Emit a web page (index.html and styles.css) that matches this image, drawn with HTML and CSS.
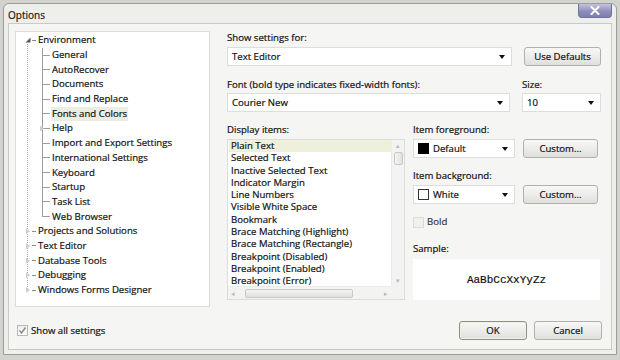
FILE: index.html
```html
<!DOCTYPE html>
<html lang="en">
<head>
    <meta charset="UTF-8">
    <title>Options</title>
    <link rel="stylesheet" href="styles.css">
</head>
<body>
    <div class="window">
        <div class="titlebar">
            <span class="title">Options</span>
            <span class="close">
                <svg width="10" height="9" viewBox="0 0 10 9"><path d="M1.5 1 L8.5 8 M8.5 1 L1.5 8" stroke="#fff" stroke-width="2" stroke-linecap="round"/></svg>
            </span>
        </div>

        <div class="client">
            <div class="main">
                <div class="tree">
                    <ul class="roots">
                        <li>
                            <div class="row">
                                <span class="exp"><svg width="6" height="6" viewBox="0 0 6 6"><path d="M5.5 0.5 V5.5 H0.5 Z" fill="#5a5a5a"/></svg></span>
                                <span class="dash"></span>
                                <span class="text">Environment</span>
                            </div>
                            <ul class="children">
                                <li><span class="text">General</span></li>
                                <li><span class="text">AutoRecover</span></li>
                                <li><span class="text">Documents</span></li>
                                <li><span class="text">Find and Replace</span></li>
                                <li><span class="text selected">Fonts and Colors</span></li>
                                <li><span class="exp closed sub"></span><span class="text">Help</span></li>
                                <li><span class="text">Import and Export Settings</span></li>
                                <li><span class="text">International Settings</span></li>
                                <li><span class="text">Keyboard</span></li>
                                <li><span class="text">Startup</span></li>
                                <li><span class="text">Task List</span></li>
                                <li><span class="text">Web Browser</span></li>
                            </ul>
                        </li>
                        <li><div class="row"><span class="exp closed"></span><span class="dash"></span><span class="text">Projects and Solutions</span></div></li>
                        <li><div class="row"><span class="exp closed"></span><span class="dash"></span><span class="text">Text Editor</span></div></li>
                        <li><div class="row"><span class="exp closed"></span><span class="dash"></span><span class="text">Database Tools</span></div></li>
                        <li><div class="row"><span class="exp closed"></span><span class="dash"></span><span class="text">Debugging</span></div></li>
                        <li><div class="row"><span class="exp closed"></span><span class="dash"></span><span class="text">Windows Forms Designer</span></div></li>
                    </ul>
                </div>

                <div class="pane">
                    <div class="label">Show settings for:</div>
                    <div class="line first">
                        <div class="select"><span>Text Editor</span><i class="arrow"></i></div>
                        <div class="button">Use Defaults</div>
                    </div>

                    <div class="line labels">
                        <div class="label">Font (bold type indicates fixed-width fonts):</div>
                        <div class="label">Size:</div>
                    </div>
                    <div class="line second">
                        <div class="select"><span>Courier New</span><i class="arrow"></i></div>
                        <div class="select"><span>10</span><i class="arrow"></i></div>
                    </div>

                    <div class="lower">
                        <div class="items-col">
                            <div class="label head">Display items:</div>
                            <div class="listbox">
                                <div class="items">
                                    <div class="item current">Plain Text</div>
                                    <div class="item">Selected Text</div>
                                    <div class="item">Inactive Selected Text</div>
                                    <div class="item">Indicator Margin</div>
                                    <div class="item">Line Numbers</div>
                                    <div class="item">Visible White Space</div>
                                    <div class="item">Bookmark</div>
                                    <div class="item">Brace Matching (Highlight)</div>
                                    <div class="item">Brace Matching (Rectangle)</div>
                                    <div class="item">Breakpoint (Disabled)</div>
                                    <div class="item">Breakpoint (Enabled)</div>
                                    <div class="item">Breakpoint (Error)</div>
                                </div>
                                <div class="vscroll">
                                    <span class="sarrow">&#9652;</span>
                                    <span class="vthumb"></span>
                                    <span class="sarrow bottom">&#9662;</span>
                                </div>
                                <div class="hscroll">
                                    <span class="sarrow">&#9666;</span>
                                    <span class="hthumb"></span>
                                    <span class="sarrow">&#9656;</span>
                                </div>
                                <div class="corner"></div>
                            </div>
                        </div>

                        <div class="props-col">
                            <div class="label head">Item foreground:</div>
                            <div class="line color">
                                <div class="select"><span class="swatch black"></span><span>Default</span><i class="arrow"></i></div>
                                <div class="button">Custom...</div>
                            </div>
                            <div class="label head gap">Item background:</div>
                            <div class="line color">
                                <div class="select"><span class="swatch white"></span><span>White</span><i class="arrow"></i></div>
                                <div class="button">Custom...</div>
                            </div>
                            <div class="check-line bold">
                                <span class="box disabled"></span>
                                <span>Bold</span>
                            </div>
                            <div class="label head sample-label">Sample:</div>
                            <div class="sample">AaBbCcXxYyZz</div>
                        </div>
                    </div>
                </div>
            </div>

            <div class="footer">
                <div class="check-line">
                    <span class="box"><svg width="9" height="9" viewBox="0 0 9 9"><path d="M1.5 4.5 L3.5 7 L7.5 1.5" fill="none" stroke="#8c8c8c" stroke-width="1.4"/></svg></span>
                    <span>Show all settings</span>
                </div>
                <div class="buttons">
                    <div class="button default">OK</div>
                    <div class="button">Cancel</div>
                </div>
            </div>
        </div>
    </div>
</body>
</html>
```

FILE: styles.css
```css
body { margin: 0; background: linear-gradient(#d2d2ce 0 355px, #4e4f50 355px); font-family: "Open Sans", "Liberation Sans", sans-serif; font-size: 9.6px; color: #111; -webkit-text-stroke: 0.2px #111; }

.window { margin: 3px 3px 0 3px; height: 352px; box-sizing: border-box; background: #eeeeeb; border: 1px solid #9c9c9a; border-radius: 6px 6px 0 0; padding: 0 4px 4px; display: flex; flex-direction: column; }
.titlebar { height: 19px; display: flex; justify-content: space-between; align-items: flex-start; }
.title { padding-top: 4px; font-size: 10px; color: #222; }
.close { width: 34px; height: 14px; display: flex; align-items: center; justify-content: center; background: linear-gradient(#c4c4de, #8e8ebe 55%, #7e7eb0); border: 1px solid #72729a; border-top: none; border-radius: 0 0 4px 4px; box-sizing: border-box; }

.client { flex: 1; background: #f5f5f3; border: 1px solid #c9c9c5; padding: 7px 9px 0 6px; display: flex; flex-direction: column; }
.main { display: grid; grid-template-columns: 195px 1fr; column-gap: 17px; }

/* tree */
.tree { height: 276px; box-sizing: border-box; background: #fff; border: 1px solid #dcdcd8; padding-top: 1px; }
.tree ul { list-style: none; margin: 0; padding: 0; }
.roots { background: repeating-linear-gradient(#a9a9a9 0 1px, transparent 1px 2px) 11px 7px / 1px calc(100% - 14.7px) no-repeat; }
.row { display: flex; align-items: center; height: 14.7px; padding-left: 9px; }
.exp { width: 6px; height: 6px; display: flex; background: #fff; }
.exp.closed { width: 4px; height: 6px; margin-left: 1px; margin-right: 1px; clip-path: polygon(0 0, 100% 50%, 0 100%); background: #cfcfcf; }
.exp.sub { margin-left: -11px; margin-right: 7px; }
.dash { width: 4px; height: 1px; background: #8c8c8c; margin-left: 1px; }
.row .text { margin-left: 1px; }
.text { padding: 0 1px; line-height: 14px; }
.text.selected { background: #ecede2; }
.children li { height: 14.7px; display: flex; align-items: center; padding-left: 35px; background: linear-gradient(#9c9c9c, #9c9c9c) 26px 0 / 1px 100% no-repeat, linear-gradient(#9c9c9c, #9c9c9c) 26px 50% / 8px 1px no-repeat; }
.children li:last-child { background: linear-gradient(#9c9c9c, #9c9c9c) 26px 0 / 1px 50% no-repeat, linear-gradient(#9c9c9c, #9c9c9c) 26px 50% / 8px 1px no-repeat; }

/* right pane */
.pane { display: flex; flex-direction: column; padding-right: 1px; }
.label { line-height: 14px; height: 14px; white-space: nowrap; }
.label.head { margin-bottom: 2px; }
.line { display: grid; grid-template-columns: 1fr 77px; column-gap: 12px; }
.line.first { margin-top: 2px; }
.line.labels { margin-top: 12px; grid-template-columns: 1fr 79px; }
.line.second { margin-top: 1px; grid-template-columns: 1fr 79px; }

.select { height: 19px; box-sizing: border-box; background: #fff; border: 1px solid #dddddb; display: flex; align-items: center; padding: 0 6px 0 4px; }
.select span { flex: 1; }
.arrow { width: 0; height: 0; border-left: 3.5px solid transparent; border-right: 3.5px solid transparent; border-top: 4px solid #111; }
.button { height: 19px; box-sizing: border-box; border: 1px solid #b0b0ac; border-radius: 3px; background: linear-gradient(#f8f8f7, #ececea 50%, #dfdfdc); display: flex; align-items: center; justify-content: center; }
.button.default { border-color: #8f8f88; box-shadow: inset 0 0 0 1px #eef3e0; }

.lower { margin-top: 11px; display: grid; grid-template-columns: 178px 1fr; column-gap: 8px; }

.listbox { height: 161px; box-sizing: border-box; background: #fff; border: 1px solid #dcdcd8; display: grid; grid-template-columns: 1fr 13px; grid-template-rows: 1fr 13px; }
.items { overflow: hidden; padding-left: 1px; }
.item { height: 12.3px; line-height: 12.3px; padding-left: 2px; white-space: nowrap; }
.item.current { background: #eef0dc; }
.vscroll { background: #f3f3f1; border-left: 1px solid #ececea; display: flex; flex-direction: column; align-items: center; }
.vscroll .bottom { margin-top: auto; }
.sarrow { font-size: 7px; line-height: 11px; color: #b8b8b8; -webkit-text-stroke: 0; }
.vthumb { width: 9px; height: 13px; box-sizing: border-box; border: 1px solid #c9c9c6; border-radius: 2px; background: linear-gradient(90deg, #f4f4f3, #e2e2df); margin-top: 1px; }
.hscroll { background: #f3f3f1; border-top: 1px solid #ececea; display: flex; align-items: center; gap: 4px; padding: 0 3px; }
.hthumb { width: 108px; height: 9px; box-sizing: border-box; border: 1px solid #c9c9c6; border-radius: 2px; background: linear-gradient(#f4f4f3, #dededb); margin-left: 6px; margin-right: auto; }
.corner { background: #f3f3f1; }

.props-col { display: flex; flex-direction: column; }
.line.color { grid-template-columns: 102px 75px; column-gap: 8px; }
.label.gap { margin-top: 11px; }
.swatch { flex: none !important; width: 11px; height: 11px; box-sizing: border-box; margin-right: 4px; }
.swatch.black { background: #000; }
.swatch.white { background: #fff; border: 1px solid #333; }

.check-line { display: flex; align-items: center; gap: 3px; line-height: 14px; }
.box { width: 11px; height: 11px; box-sizing: border-box; border: 1px solid #b9b9b6; background: linear-gradient(#eeeeec, #fdfdfc); display: flex; align-items: center; justify-content: center; }
.box.disabled { border-color: #dadad7; background: #f0f0ee; }
.check-line.bold { margin-top: 11px; color: #3a3a3a; -webkit-text-stroke: 0.2px #3a3a3a; }
.sample-label { margin-top: 13px; }
.sample { margin-top: 1px; height: 41px; background: #fff; display: flex; align-items: center; justify-content: center; font-family: "Liberation Mono", monospace; font-size: 11px; margin-right: 1px; }

.footer { margin-top: 14px; display: flex; justify-content: space-between; align-items: center; padding-left: 2px; padding-right: 0; }
.buttons { display: flex; gap: 7px; }
.buttons .button { width: 68px; }
```
